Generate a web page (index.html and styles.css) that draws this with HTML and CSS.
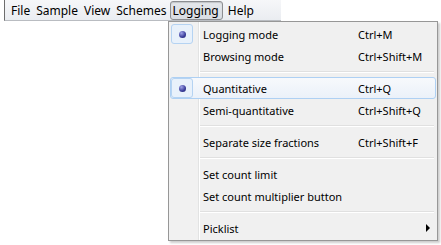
FILE: index.html
```html
<!DOCTYPE html>
<html lang="en">
<head>
    <meta charset="UTF-8">
    <title>Logging menu</title>
    <link rel="stylesheet" href="styles.css">
</head>
<body>
    <nav class="menubar">
        <span class="menubar-item">File</span>
        <span class="menubar-item">Sample</span>
        <span class="menubar-item">View</span>
        <span class="menubar-item">Schemes</span>
        <span class="menubar-item open">Logging</span>
        <span class="menubar-item">Help</span>
    </nav>

    <div class="dropdown">
        <div class="item checked"><span class="icon"><span class="bullet"></span></span><span class="label">Logging mode</span><span class="shortcut">Ctrl+M</span></div>
        <div class="item"><span class="icon"></span><span class="label">Browsing mode</span><span class="shortcut">Ctrl+Shift+M</span></div>
        <div class="separator"></div>
        <div class="item checked hover"><span class="icon"><span class="bullet"></span></span><span class="label">Quantitative</span><span class="shortcut">Ctrl+Q</span></div>
        <div class="item"><span class="icon"></span><span class="label">Semi-quantitative</span><span class="shortcut">Ctrl+Shift+Q</span></div>
        <div class="separator"></div>
        <div class="item"><span class="icon"></span><span class="label">Separate size fractions</span><span class="shortcut">Ctrl+Shift+F</span></div>
        <div class="separator"></div>
        <div class="item"><span class="icon"></span><span class="label">Set count limit</span><span class="shortcut"></span></div>
        <div class="item"><span class="icon"></span><span class="label">Set count multiplier button</span><span class="shortcut"></span></div>
        <div class="separator"></div>
        <div class="item"><span class="icon"></span><span class="label">Picklist</span><span class="shortcut"></span><span class="arrow"></span></div>
    </div>
</body>
</html>
```

FILE: styles.css
```css
body {
    margin: 0;
    background: #fff;
    font-family: "Noto Sans", "Open Sans", sans-serif;
    font-size: 11px;
    color: #000;
    position: relative;
    height: 245px;
    overflow: hidden;
}

/* Menu bar */
.menubar {
    display: flex;
    width: 273px;
    height: 20px;
    margin-left: 4px;
    padding-left: 3px;
    align-items: center;
    font-size: 12px;
    background: linear-gradient(#f6f7f9, #eaedf1);
    border-left: 1px solid #6d6d6d;
    border-bottom: 1px solid #b9bcc1;
}

.menubar-item {
    box-sizing: border-box;
    padding: 0 2px;
    height: 19px;
    line-height: 17px;
    border: 1px solid transparent;
    border-radius: 3px;
}

.menubar-item.open {
    padding: 0 3px 0 2px;
    margin-right: 2px;
    border-color: #8c8e92;
    background: linear-gradient(#e4e7eb, #d9dde3);
    box-shadow: inset 0 1px 1px rgba(0, 0, 0, 0.15);
}

/* Dropdown */
.dropdown {
    position: absolute;
    left: 168px;
    top: 21px;
    width: 266px;
    padding: 1px;
    background: linear-gradient(to right, #f1f1f1 29px, #e2e3e3 29px, #e2e3e3 30px, #fff 30px, #fff 31px, #f0f0f0 31px);
    border: 1px solid #979797;
    box-shadow: 2px 2px 2px rgba(0, 0, 0, 0.2);
}

.item {
    display: flex;
    align-items: center;
    height: 20px;
    border: 1px solid transparent;
    border-radius: 3px;
}

.item.hover {
    border-color: #aed0f3;
    background: linear-gradient(#f7f9fc, #ebf1f9);
}

.icon {
    width: 22px;
    height: 20px;
    margin-right: 10px;
    box-sizing: border-box;
    display: flex;
    align-items: center;
    justify-content: center;
    border: 1px solid transparent;
    border-radius: 3px;
}

.item.checked .icon {
    border-color: #b5d3f2;
    background: #e8f1fb;
}

.bullet {
    width: 7px;
    height: 7px;
    border-radius: 50%;
    background: radial-gradient(circle at 35% 30%, #9fa3e8, #3a3d9a 60%, #1e1f66);
}

.label {
    flex: 1;
}

.shortcut {
    width: 77px;
}

.arrow {
    width: 0;
    height: 0;
    margin-right: 5px;
    border-top: 4px solid transparent;
    border-bottom: 4px solid transparent;
    border-left: 4px solid #000;
}

.separator {
    height: 1px;
    margin: 4px 2px 4px 30px;
    background: #e0e0e0;
    border-bottom: 1px solid #fff;
}
```
